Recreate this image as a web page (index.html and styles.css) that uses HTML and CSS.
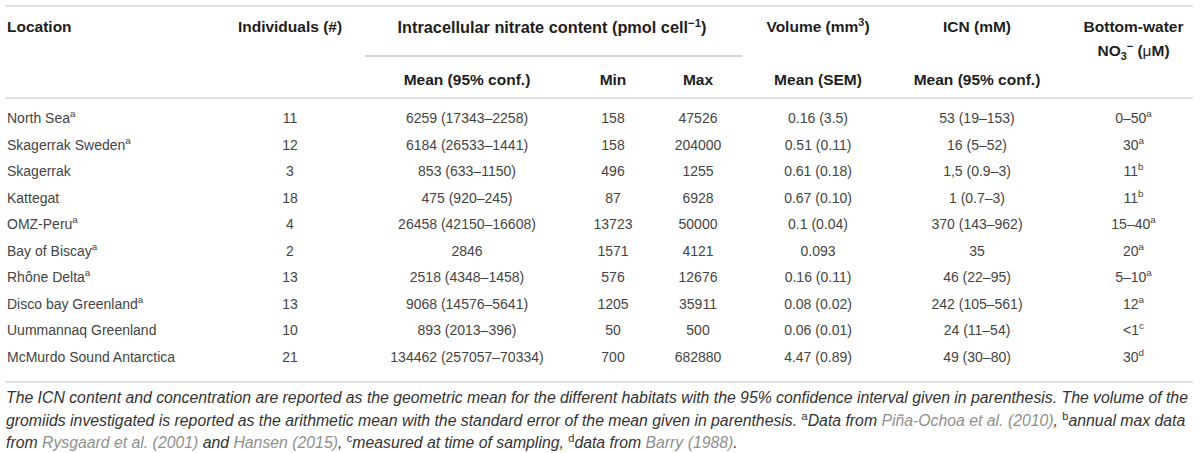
FILE: index.html
```html
<!DOCTYPE html>
<html lang="en">
<head>
  <meta charset="UTF-8">
  <title>Intracellular nitrate in gromiids</title>
  <link rel="stylesheet" href="styles.css">
</head>
<body>
  <table class="data-table">
    <colgroup>
      <col class="c-loc">
      <col class="c-ind">
      <col class="c-mean">
      <col class="c-min">
      <col class="c-max">
      <col class="c-vol">
      <col class="c-icn">
      <col class="c-bw">
    </colgroup>
    <thead>
      <tr class="head-top">
        <th rowspan="2" class="left top">Location</th>
        <th rowspan="2" class="top">Individuals (#)</th>
        <th colspan="3" class="group">Intracellular nitrate content (pmol cell<sup>−1</sup>)</th>
        <th>Volume (mm<sup>3</sup>)</th>
        <th>ICN (mM)</th>
        <th rowspan="2" class="top">Bottom-water<br>NO<sub>3</sub><sup>−</sup> (<span class="mu">μ</span>M)</th>
      </tr>
      <tr class="head-sub">
        <th>Mean (95% conf.)</th>
        <th>Min</th>
        <th>Max</th>
        <th>Mean (SEM)</th>
        <th>Mean (95% conf.)</th>
      </tr>
    </thead>
    <tbody>
      <tr>
        <td class="left">North Sea<sup>a</sup></td>
        <td>11</td><td>6259 (17343–2258)</td><td>158</td><td>47526</td>
        <td>0.16 (3.5)</td><td>53 (19–153)</td><td>0–50<sup>a</sup></td>
      </tr>
      <tr>
        <td class="left">Skagerrak Sweden<sup>a</sup></td>
        <td>12</td><td>6184 (26533–1441)</td><td>158</td><td>204000</td>
        <td>0.51 (0.11)</td><td>16 (5–52)</td><td>30<sup>a</sup></td>
      </tr>
      <tr>
        <td class="left">Skagerrak</td>
        <td>3</td><td>853 (633–1150)</td><td>496</td><td>1255</td>
        <td>0.61 (0.18)</td><td>1,5 (0.9–3)</td><td>11<sup>b</sup></td>
      </tr>
      <tr>
        <td class="left">Kattegat</td>
        <td>18</td><td>475 (920–245)</td><td>87</td><td>6928</td>
        <td>0.67 (0.10)</td><td>1 (0.7–3)</td><td>11<sup>b</sup></td>
      </tr>
      <tr>
        <td class="left">OMZ-Peru<sup>a</sup></td>
        <td>4</td><td>26458 (42150–16608)</td><td>13723</td><td>50000</td>
        <td>0.1 (0.04)</td><td>370 (143–962)</td><td>15–40<sup>a</sup></td>
      </tr>
      <tr>
        <td class="left">Bay of Biscay<sup>a</sup></td>
        <td>2</td><td>2846</td><td>1571</td><td>4121</td>
        <td>0.093</td><td>35</td><td>20<sup>a</sup></td>
      </tr>
      <tr>
        <td class="left">Rhône Delta<sup>a</sup></td>
        <td>13</td><td>2518 (4348–1458)</td><td>576</td><td>12676</td>
        <td>0.16 (0.11)</td><td>46 (22–95)</td><td>5–10<sup>a</sup></td>
      </tr>
      <tr>
        <td class="left">Disco bay Greenland<sup>a</sup></td>
        <td>13</td><td>9068 (14576–5641)</td><td>1205</td><td>35911</td>
        <td>0.08 (0.02)</td><td>242 (105–561)</td><td>12<sup>a</sup></td>
      </tr>
      <tr>
        <td class="left">Uummannaq Greenland</td>
        <td>10</td><td>893 (2013–396)</td><td>50</td><td>500</td>
        <td>0.06 (0.01)</td><td>24 (11–54)</td><td>&lt;1<sup>c</sup></td>
      </tr>
      <tr>
        <td class="left">McMurdo Sound Antarctica</td>
        <td>21</td><td>134462 (257057–70334)</td><td>700</td><td>682880</td>
        <td>4.47 (0.89)</td><td>49 (30–80)</td><td>30<sup>d</sup></td>
      </tr>
    </tbody>
  </table>

  <p class="table-note">
    The ICN content and concentration are reported as the geometric mean for the different habitats with the 95% confidence interval given in parenthesis. The volume of the gromiids investigated is reported as the arithmetic mean with the standard error of the mean given in parenthesis. <sup>a</sup>Data from <a href="#">Piña-Ochoa et al. (2010)</a>, <sup>b</sup>annual max data from <a href="#">Rysgaard et al. (2001)</a> and <a href="#">Hansen (2015)</a>, <sup>c</sup>measured at time of sampling, <sup>d</sup>data from <a href="#">Barry (1988)</a>.
  </p>
</body>
</html>
```

FILE: styles.css
```css
body {
  margin: 0;
  padding: 5px 0 0 6px;
  background: #fff;
  font-family: "Liberation Sans", Arial, sans-serif;
  color: #444;
}

.data-table {
  width: 1187px;
  border-collapse: collapse;
  table-layout: fixed;
}
.c-loc  { width: 226px; }
.c-ind  { width: 116px; }
.c-mean { width: 238px; }
.c-min  { width: 54px; }
.c-max  { width: 116px; }
.c-vol  { width: 124px; }
.c-icn  { width: 194px; }
.c-bw   { width: 119px; }

.data-table th {
  font-size: 15.5px;
  font-weight: bold;
  color: #1e1e1e;
  line-height: 24px;
  text-align: center;
  white-space: nowrap;
  padding: 0 2px;
}
.data-table thead {
  border-top: 2px solid #dedede;
  border-bottom: 2px solid #dedede;
}
.head-top th {
  padding-top: 8px;
  padding-bottom: 18px;
}
.head-top th.top {
  vertical-align: top;
}
.head-top th.group {
  font-size: 16.3px;
  background: linear-gradient(#d6d6d6, #d6d6d6) no-repeat 17px 100% / calc(100% - 31px) 2px;
}
.head-sub th {
  padding-top: 11px;
  padding-bottom: 5px;
}
.data-table .left {
  text-align: left;
  padding-left: 1px;
}

.data-table td {
  font-size: 14px;
  line-height: 26.5px;
  text-align: center;
  white-space: nowrap;
  padding: 0 2px;
}
.data-table tbody tr:first-child td {
  padding-top: 6px;
}
.data-table tbody tr:last-child td {
  padding-bottom: 11px;
}
.data-table tbody {
  border-bottom: 2px solid #dedede;
}

sup, sub {
  font-size: 0.7em;
  line-height: 0;
}
.mu {
  font-weight: normal;
}

.table-note {
  width: 1187px;
  margin: 4px 0 0;
  font-size: 15.8px;
  line-height: 22.5px;
  font-style: italic;
  color: #333;
}
.table-note sup {
  font-style: normal;
}
.table-note a {
  color: #8f8f8f;
  text-decoration: none;
}
```
